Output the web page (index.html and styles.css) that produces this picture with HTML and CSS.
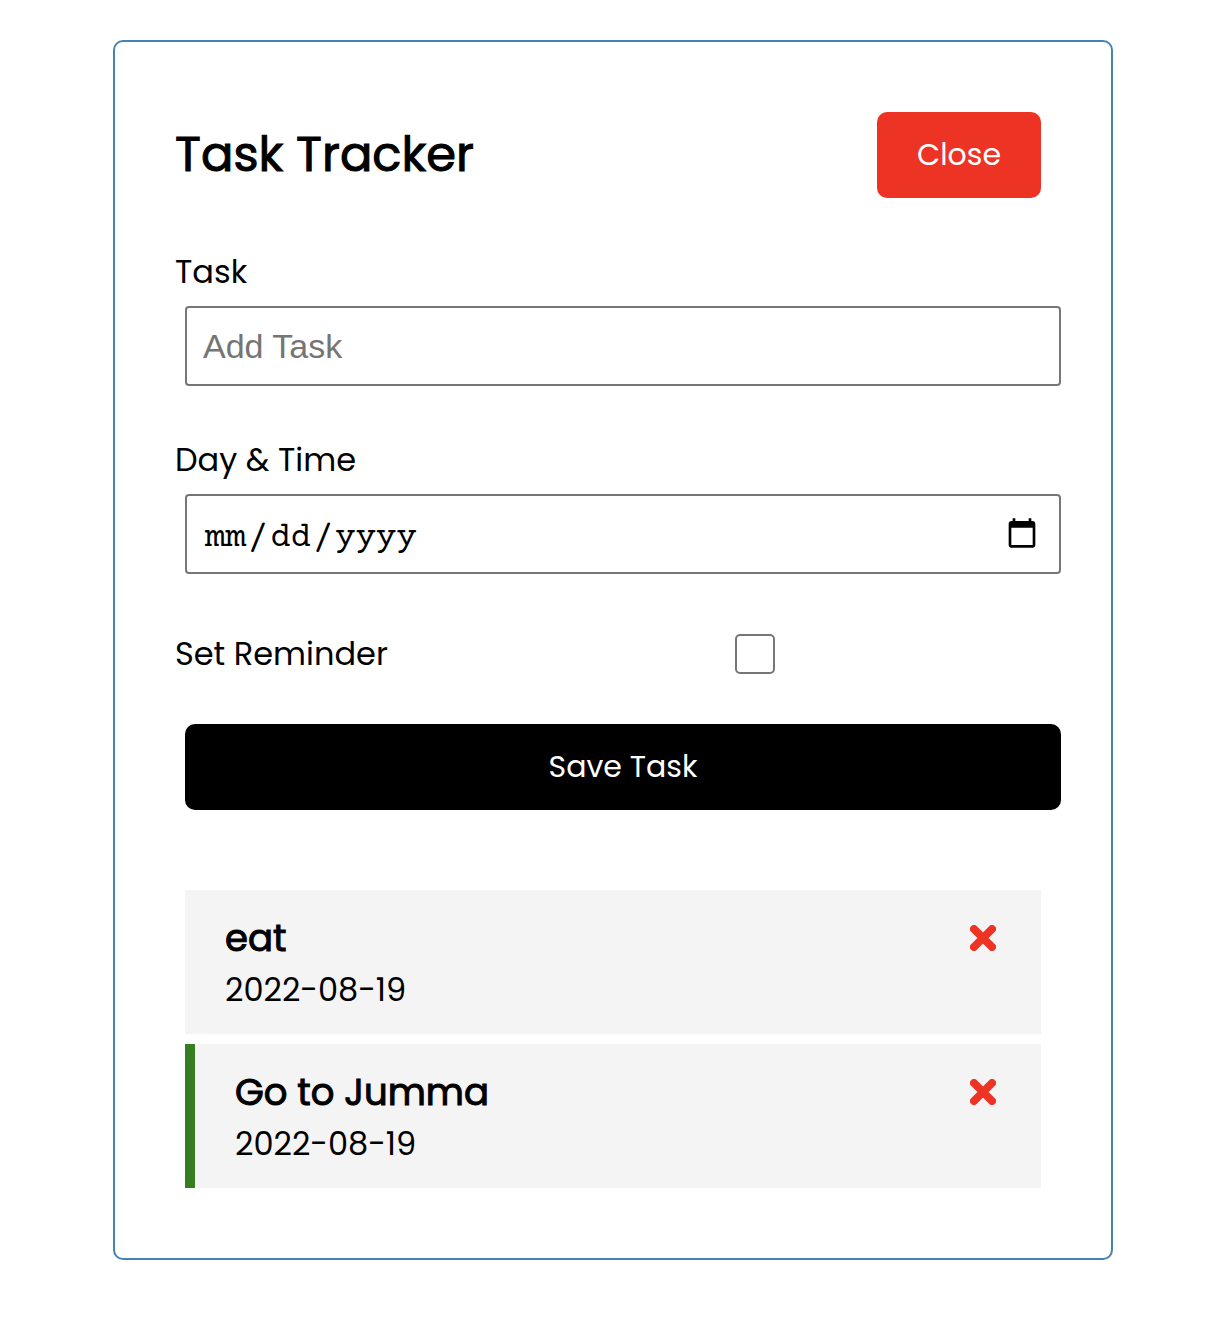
FILE: index.html
```html
<!DOCTYPE html>
<html lang="en">
<head>
<meta charset="utf-8">
<meta name="viewport" content="width=device-width, initial-scale=1">
<title>Task Tracker</title>
<link rel="stylesheet" href="styles.css">
</head>
<body>
<main class="container">
  <header class="header">
    <h1 class="title">Task Tracker</h1>
    <button class="btn btn-close" type="button">Close</button>
  </header>
  <form class="add-form">
    <div class="form-control">
      <label for="task">Task</label>
      <input class="field" id="task" type="text" placeholder="Add Task">
    </div>
    <div class="form-control">
      <label for="day">Day &amp; Time</label>
      <input class="field field-date" id="day" type="date">
    </div>
    <div class="form-control form-control-check">
      <label for="reminder">Set Reminder</label>
      <input class="check" id="reminder" type="checkbox">
    </div>
    <button class="btn btn-block" type="submit">Save Task</button>
  </form>
  <section class="tasks">
    <article class="task">
      <div class="task-head">
        <h2 class="task-title">eat</h2>
        <button class="delete" type="button" aria-label="Delete eat">
          <svg viewBox="0 0 26 26" aria-hidden="true"><path d="M4 4L22 22M22 4L4 22"/></svg>
        </button>
      </div>
      <p class="task-day">2022-08-19</p>
    </article>
    <article class="task reminder">
      <div class="task-head">
        <h2 class="task-title">Go to Jumma</h2>
        <button class="delete" type="button" aria-label="Delete Go to Jumma">
          <svg viewBox="0 0 26 26" aria-hidden="true"><path d="M4 4L22 22M22 4L4 22"/></svg>
        </button>
      </div>
      <p class="task-day">2022-08-19</p>
    </article>
  </section>
</main>
</body>
</html>
```

FILE: styles.css
```css
* {
  box-sizing: border-box;
  margin: 0;
  padding: 0;
}

body {
  padding: 40px 0 40px 12px;
  background: #fff;
  color: #000;
  font-family: Poppins, Inter, sans-serif;
  font-size: 32px;
  line-height: 48px;
}

.container {
  max-width: 1000px;
  margin: 0 auto;
  padding: 60px;
  border: 2px solid steelblue;
  border-radius: 10px;
}

.header {
  display: flex;
  justify-content: space-between;
  align-items: center;
  margin-bottom: 40px;
}

.title,
.task-title {
  font-weight: 400;
  -webkit-text-stroke: 1px currentColor;
}

.title {
  font-size: 48px;
  line-height: 72px;
}

.btn {
  margin: 10px;
  padding: 20px 40px;
  border: 0;
  border-radius: 10px;
  background: #000;
  color: #fff;
  font-family: inherit;
  font-size: 30px;
  line-height: 46px;
  cursor: pointer;
}

.btn-close {
  background: #ed3324;
}

.btn-block {
  width: 100%;
  margin: 0 10px;
}

.add-form {
  margin-bottom: 80px;
}

.form-control {
  margin-bottom: 50px;
}

.form-control label {
  display: block;
}

.field {
  display: block;
  width: 100%;
  height: 80px;
  margin: 10px 10px 0;
  padding: 6px 16px;
  border: 2px solid #767676;
  border-radius: 4px;
  background: #fff;
  color: #000;
  font-family: "Liberation Sans", Arial, sans-serif;
  font-size: 34px;
}

.field::placeholder {
  color: #757575;
}

.field-date {
  padding-right: 18px;
  font-family: "Nimbus Mono PS", "Courier Prime", "Liberation Mono", "Courier New", monospace;
}

.field-date::-webkit-datetime-edit {
  padding: 8px 0 0 1px;
}

.field-date::-webkit-datetime-edit-text {
  padding: 0 1px;
}

.form-control-check {
  display: grid;
  grid-template-columns: 284px 1fr;
  align-items: center;
  height: 60px;
  margin-bottom: 40px;
}

.check {
  appearance: none;
  justify-self: center;
  width: 40px;
  height: 40px;
  border: 2px solid #767676;
  border-radius: 5px;
  background: #fff;
}

.check:checked {
  background: #000;
}

.tasks {
  display: grid;
  gap: 10px;
  margin: 0 10px 10px;
}

.task {
  padding: 20px 40px;
  background: #f4f4f4;
}

.reminder {
  border-left: 10px solid #377e22;
}

.task-head {
  display: flex;
  justify-content: space-between;
  align-items: center;
}

.task-title {
  font-size: 37px;
  line-height: 56px;
}

.delete {
  display: flex;
  padding: 5px;
  border: 0;
  background: none;
  color: #ed3324;
  cursor: pointer;
}

.delete svg {
  width: 26px;
  height: 26px;
  fill: none;
  stroke: currentColor;
  stroke-width: 8;
  stroke-linecap: round;
}
```
